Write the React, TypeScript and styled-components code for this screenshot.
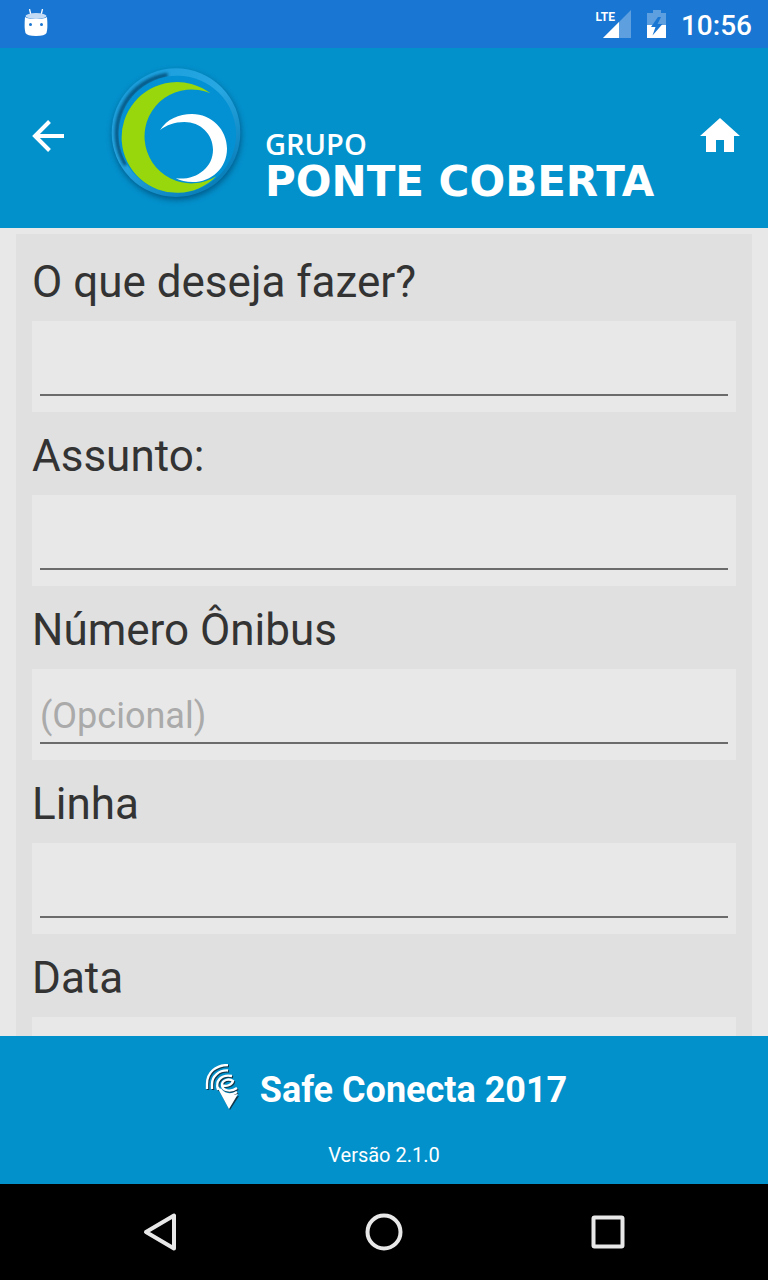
import React from "react";
import styled, { createGlobalStyle } from "styled-components";

const BRAND = "#0391cc";

const GlobalStyle = createGlobalStyle`
  * { box-sizing: border-box; }
  body {
    margin: 0;
    background: #e8e8e8;
    font-family: Roboto, "Liberation Sans", sans-serif;
  }
`;

const Screen = styled.div`
  display: flex;
  flex-direction: column;
  height: 100vh;
`;

const StatusBar = styled.div`
  flex: none;
  display: flex;
  align-items: center;
  justify-content: space-between;
  height: 48px;
  padding: 0 16px 0 24px;
  background: #1976d2;
  color: #fff;
`;

const StatusIcons = styled.div`
  display: flex;
  align-items: center;
  gap: 15px;
`;

const Signal = styled.div`
  display: flex;
  align-items: flex-start;
`;

const NetworkType = styled.span`
  margin-right: -14px;
  font-size: 12px;
  line-height: 16px;
  font-weight: 700;
`;

const Clock = styled.time`
  padding-top: 4px;
  font-size: 28px;
  line-height: 32px;
  font-weight: 500;
`;

const Header = styled.header`
  flex: none;
  display: flex;
  align-items: center;
  justify-content: space-between;
  height: 180px;
  padding: 0 24px 4px;
  background: ${BRAND};
  color: #fff;
`;

const IconButton = styled.button`
  display: flex;
  padding: 0;
  border: 0;
  background: none;
  color: inherit;
  cursor: pointer;
`;

const Brand = styled.div`
  display: flex;
  align-items: flex-end;
  flex: 1;
  padding: 0 0 2px 28px;

  svg {
    flex: none;
  }
`;

const BrandName = styled.div`
  display: flex;
  flex-direction: column;
  padding: 0 0 8px 12px;
  white-space: nowrap;
`;

const BrandGroup = styled.span`
  font: 600 29px/36px "Open Sans", "Noto Sans", sans-serif;
`;

const BrandCompany = styled.span`
  font: 700 42px/40px "DejaVu Sans", sans-serif;
`;

const Main = styled.main`
  flex: 1;
  min-height: 0;
  overflow-y: auto;
  scrollbar-width: none;
  padding: 6px 16px 0;
  background: #e8e8e8;
`;

const Form = styled.form`
  padding: 4px 16px 16px;
  background: #e0e0e0;
`;

const Label = styled.label`
  display: block;
  padding: 18px 0 13px;
  font-size: 44px;
  line-height: 52px;
  color: #333;
`;

const Field = styled.div`
  padding: 0 8px 16px;
  background: #e8e8e8;
`;

const Input = styled.input`
  display: block;
  width: 100%;
  height: 75px;
  padding: 20px 0 0;
  border: 0;
  border-bottom: 2px solid #6b6b6b;
  border-radius: 0;
  outline: none;
  background: transparent;
  font-family: inherit;
  font-size: 36px;
  color: #333;

  &::placeholder {
    color: #aaa;
    opacity: 1;
  }
`;

const Footer = styled.footer`
  flex: none;
  display: flex;
  flex-direction: column;
  align-items: center;
  height: 148px;
  padding-top: 28px;
  background: ${BRAND};
  color: #fff;
`;

const Product = styled.div`
  display: flex;
  align-items: flex-start;
  gap: 19px;
  font-size: 36px;
  line-height: 52px;
  font-weight: 700;
`;

const Version = styled.small`
  margin-top: 27px;
  font-size: 20px;
  line-height: 24px;
`;

const NavBar = styled.nav`
  flex: none;
  display: flex;
  align-items: center;
  height: 96px;
  padding: 0 48px;
  background: #000;
  color: #e8e8e8;
`;

const NavButton = styled(IconButton)`
  flex: 1;
  justify-content: center;
`;

const RobotIcon = () => (
  <svg width="24" height="30" viewBox="0 1 24 30" aria-hidden="true">
    <path d="M5.500 1l1.200 5M18.500 1l-1.200 5" stroke="#fff" strokeWidth="1.300" fill="none" />
    <path d="M1 9Q0 20 1.500 25Q3 28 12 28T22.500 25Q24 20 23 9Q20 11 12 11T1 9Z" fill="#fff" />
    <ellipse cx="12" cy="8" rx="10.500" ry="3" fill="#c3dbf4" />
    <circle cx="6.500" cy="16.500" r="1.500" fill="#1976d2" />
    <circle cx="17.500" cy="16.500" r="1.500" fill="#1976d2" />
  </svg>
);

const SignalIcon = () => (
  <svg width="30" height="30" viewBox="0 0 30 30" aria-hidden="true">
    <path d="M30 1V29H2Z" fill="#fff" opacity=".3" />
    <path d="M18 13V29H2Z" fill="#fff" />
  </svg>
);

const BatteryIcon = () => (
  <svg width="20" height="30" viewBox="0 0 20 30" aria-hidden="true">
    <path d="M7 1H15V4H20V16H1V4H7Z" fill="#fff" opacity=".3" />
    <path d="M1 16H20V29H1Z" fill="#fff" />
    <path d="M12 8L5 18H9.500L6.500 26.500L16.500 15H11.500L15 8Z" fill="#1976d2" />
  </svg>
);

const BrandMark = () => (
  <svg width="153" height="150" viewBox="0 0 459 450" aria-hidden="true">
    <defs>
      <linearGradient id="rim" x1="0" y1="0" x2=".7" y2="1">
        <stop offset="0" stopColor="#159bda" />
        <stop offset=".5" stopColor="#28a8e3" />
        <stop offset="1" stopColor="#087db8" />
      </linearGradient>
      <filter id="soft" x="-20%" y="-20%" width="140%" height="140%">
        <feGaussianBlur stdDeviation="9" />
      </filter>
      <filter id="softEdge" x="-20%" y="-20%" width="140%" height="140%">
        <feGaussianBlur stdDeviation="5" />
      </filter>
    </defs>
    <circle cx="230" cy="226" r="193" fill="#004c77" opacity=".8" filter="url(#soft)" />
    <circle cx="228" cy="218" r="193" fill="url(#rim)" />
    <path
      d="M203 45A177 177 0 0 0 78 315"
      fill="none"
      stroke="#004a73"
      strokeWidth="13"
      opacity=".85"
      filter="url(#softEdge)"
    />
    <circle cx="232" cy="223" r="176" fill="#0391d3" />
    <g transform="translate(-1 -1)">
      <path d="M332 101A166 166 0 1 0 350 350A141 141 0 1 1 332 101Z" fill="#97d70b" />
      <path
        d="M181 211C203 178 237 163 277 163C336 163 382 210 382 267C382 324 336 367 279 367C259 367 241 363 228 356C288 363 340 325 340 270C340 223 302 187 254 187C224 187 201 196 181 211Z"
        fill="#fff"
      />
    </g>
  </svg>
);

const BackArrow = () => (
  <svg width="48" height="48" viewBox="0 0 48 48" aria-hidden="true">
    <path d="M40 24H11M25.500 9.500L11 24L25.500 38.500" fill="none" stroke="#fff" strokeWidth="4" />
  </svg>
);

const HomeIcon = () => (
  <svg width="48" height="48" viewBox="0 0 48 48" aria-hidden="true">
    <path d="M24 6L44 24H38V40H28V28H20V40H10V24H4Z" fill="#fff" />
  </svg>
);

const pinShape = (
  <>
    <path d="M6 26V21C6 9 15 2 27 2" />
    <path d="M11 26V21C11 13 18 7 27 7.500" />
    <path d="M17 27C14 18 20 11 31 13" />
    <path d="M21 22C25 24 31 22 32 18C28 15 21 17 21 22C21 27 29 30 36 25" />
    <path d="M19 26C23 32 30 33 36 29" />
  </>
);

const PinIcon = () => (
  <svg width="40" height="50" viewBox="0 1 40 50" aria-hidden="true">
    <g transform="translate(1 1)">
      <g fill="none" stroke="#12384b" strokeWidth="2.300">{pinShape}</g>
      <path d="M16 25Q22 35 37 32L28 46Z" fill="#12384b" />
    </g>
    <g fill="none" stroke="#fff" strokeWidth="2.300">{pinShape}</g>
    <path d="M15 22L18 24Q22 35 37 31L28 46Z" fill="#fff" />
  </svg>
);

const NavBackIcon = () => (
  <svg width="40" height="40" viewBox="0 0 40 40" aria-hidden="true">
    <path d="M34 3.500V36.500L6 20Z" fill="none" stroke="currentColor" strokeWidth="4" strokeLinejoin="round" />
  </svg>
);

const NavHomeIcon = () => (
  <svg width="40" height="40" viewBox="0 0 40 40" aria-hidden="true">
    <circle cx="20" cy="20" r="16.500" fill="none" stroke="currentColor" strokeWidth="4" />
  </svg>
);

const NavRecentIcon = () => (
  <svg width="40" height="40" viewBox="0 0 40 40" aria-hidden="true">
    <rect x="5.500" y="5.500" width="29" height="29" rx="1" fill="none" stroke="currentColor" strokeWidth="4" />
  </svg>
);

const fields = [
  { id: "acao", label: "O que deseja fazer?" },
  { id: "assunto", label: "Assunto:" },
  { id: "onibus", label: "Número Ônibus", placeholder: "(Opcional)" },
  { id: "linha", label: "Linha" },
  { id: "data", label: "Data" },
];

export default function App() {
  return (
    <Screen>
      <GlobalStyle />
      <StatusBar>
        <RobotIcon />
        <StatusIcons>
          <Signal>
            <NetworkType>LTE</NetworkType>
            <SignalIcon />
          </Signal>
          <BatteryIcon />
          <Clock>10:56</Clock>
        </StatusIcons>
      </StatusBar>

      <Header>
        <IconButton type="button" aria-label="Voltar">
          <BackArrow />
        </IconButton>
        <Brand>
          <BrandMark />
          <BrandName>
            <BrandGroup>GRUPO</BrandGroup>
            <BrandCompany>PONTE COBERTA</BrandCompany>
          </BrandName>
        </Brand>
        <IconButton type="button" aria-label="Início">
          <HomeIcon />
        </IconButton>
      </Header>

      <Main>
        <Form>
          {fields.map(({ id, label, placeholder }) => (
            <React.Fragment key={id}>
              <Label htmlFor={id}>{label}</Label>
              <Field>
                <Input id={id} type="text" placeholder={placeholder} />
              </Field>
            </React.Fragment>
          ))}
        </Form>
      </Main>

      <Footer>
        <Product>
          <PinIcon />
          <span>Safe Conecta 2017</span>
        </Product>
        <Version>Versão 2.1.0</Version>
      </Footer>

      <NavBar>
        <NavButton type="button" aria-label="Voltar">
          <NavBackIcon />
        </NavButton>
        <NavButton type="button" aria-label="Tela inicial">
          <NavHomeIcon />
        </NavButton>
        <NavButton type="button" aria-label="Recentes">
          <NavRecentIcon />
        </NavButton>
      </NavBar>
    </Screen>
  );
}
